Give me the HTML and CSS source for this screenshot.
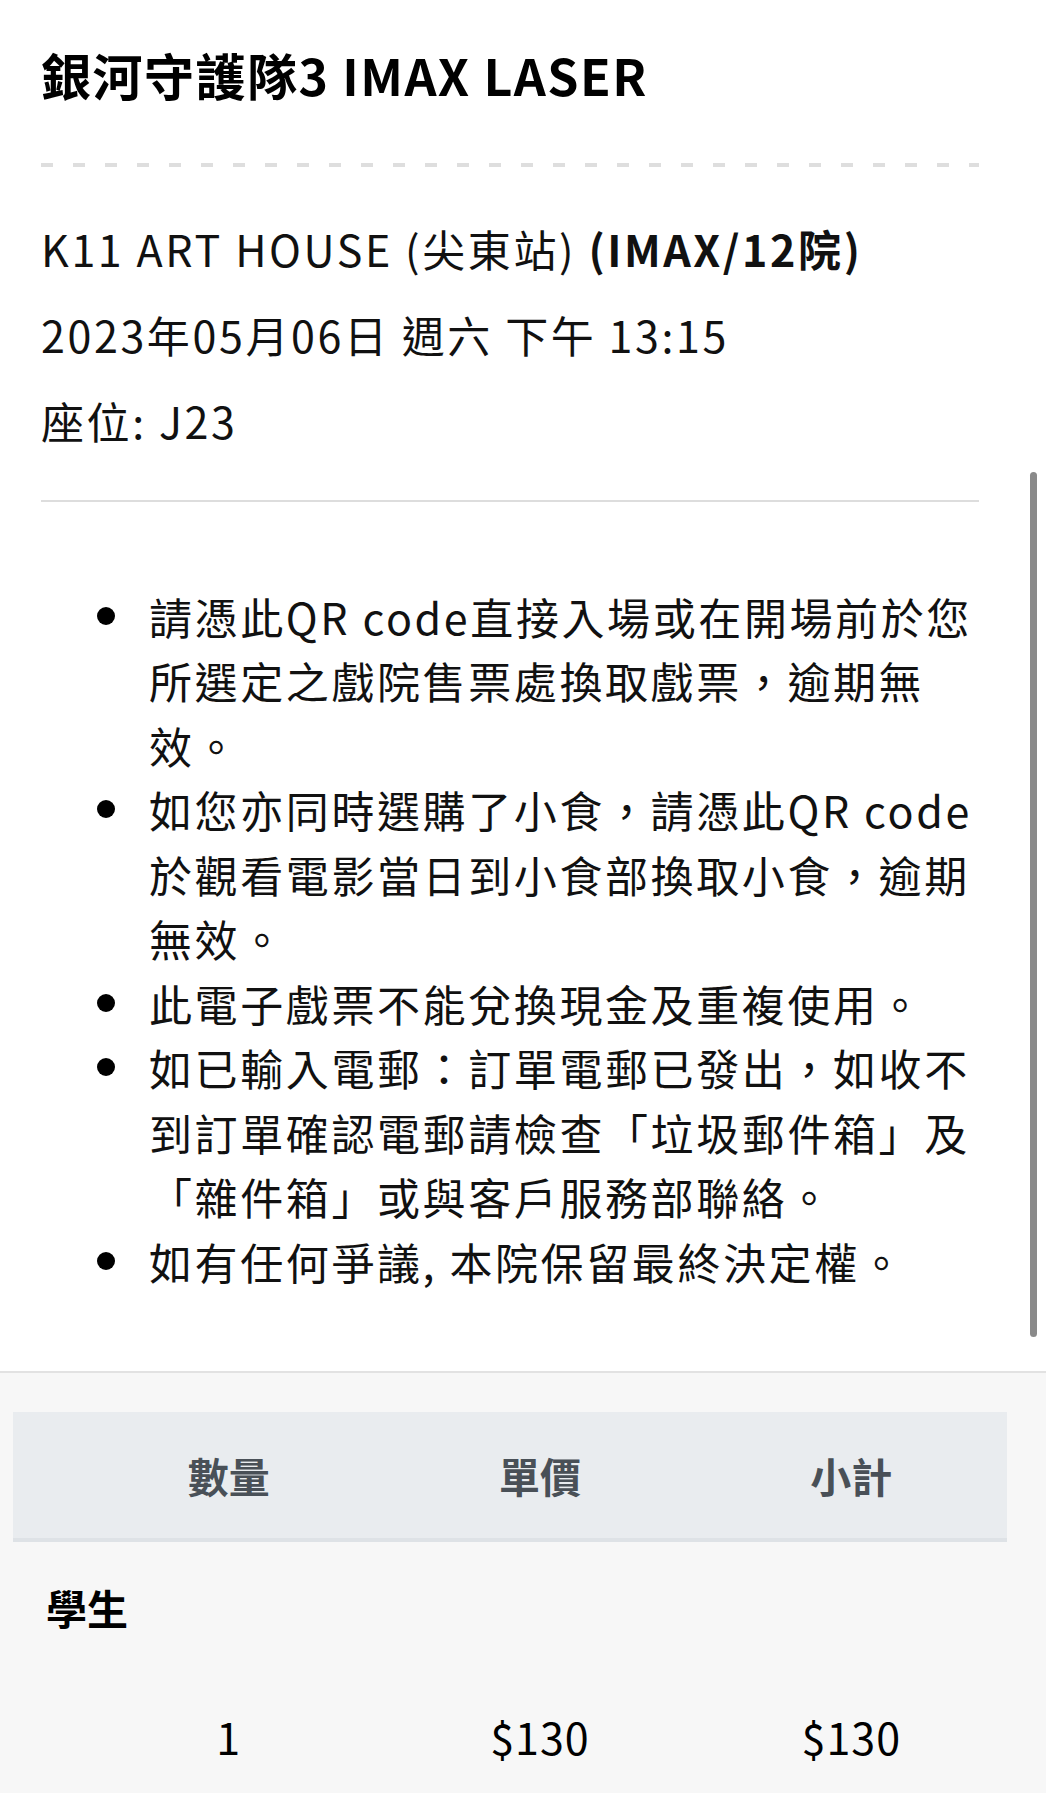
FILE: index.html
```html
<!DOCTYPE html>
<html lang="zh-Hant">
<head>
<meta charset="utf-8">
<title>電子戲票</title>
<link rel="stylesheet" href="styles.css">
</head>
<body>
<div class="page">
  <section class="ticket">
    <h1 class="title">銀河守護隊3 IMAX LASER</h1>
    <div class="dash"></div>
    <div class="info">
      <p>K11 ART HOUSE (尖東站) <b>(IMAX/12院)</b></p>
      <p>2023年05月06日 週六 下午 13:15</p>
      <p>座位: J23</p>
    </div>
    <div class="rule"></div>
    <ul class="notes">
      <li><span>請憑此QR code直接入場或在開場前於您所選定之戲院售票處換取戲票，逾期無效。</span></li>
      <li><span>如您亦同時選購了小食，請憑此QR code於觀看電影當日到小食部換取小食，逾期無效。</span></li>
      <li><span>此電子戲票不能兌換現金及重複使用。</span></li>
      <li><span>如已輸入電郵：訂單電郵已發出，如收不到訂單確認電郵請檢查「垃圾郵件箱」及「雜件箱」或與客戶服務部聯絡。</span></li>
      <li><span>如有任何爭議, 本院保留最終決定權。</span></li>
    </ul>
  </section>
  <section class="summary">
    <div class="thead">
      <div class="cell"></div>
      <div class="cell">數量</div>
      <div class="cell">單價</div>
      <div class="cell">小計</div>
    </div>
    <div class="group">學生</div>
    <div class="row">
      <div class="cell"></div>
      <div class="cell">1</div>
      <div class="cell">$130</div>
      <div class="cell">$130</div>
    </div>
  </section>
  <div class="scrollbar"></div>
</div>
</body>
</html>
```

FILE: styles.css
```css
html, body {
  margin: 0;
  padding: 0;
}
body {
  font-family: "Noto Sans CJK TC", "Noto Sans CJK SC", sans-serif;
  color: #111;
  background: #f7f7f7;
}
.page {
  position: relative;
  width: 1046px;
  min-height: 1793px;
  overflow: hidden;
}
.ticket {
  background: #fff;
  padding: 42px 67px 78px 41px;
}
.title {
  margin: 0;
  font-size: 50px;
  line-height: 64px;
  font-weight: 700;
  letter-spacing: 1.5px;
  color: #000;
}
.dash {
  margin-top: 57px;
  height: 4px;
  background: repeating-linear-gradient(to right, #dedede 0 12px, transparent 12px 32px);
}
.info {
  margin-top: 49px;
}
.info p {
  margin: 0 0 21.5px;
  font-size: 43px;
  line-height: 64.5px;
  letter-spacing: 2.6px;
}
.info p:last-child {
  margin-bottom: 0;
}
.info b {
  font-weight: 700;
}
.rule {
  margin-top: 47px;
  height: 2px;
  background: #dddddd;
}
.notes {
  list-style: none;
  margin: 82px 0 0;
  padding: 0;
}
.notes li {
  display: flex;
  align-items: flex-start;
  font-size: 43px;
  line-height: 64.5px;
  letter-spacing: 2.6px;
}
.notes li::before {
  content: "";
  flex: 0 0 18px;
  height: 18px;
  border-radius: 50%;
  background: #000;
  margin: 23px 34px 0 56px;
}
.notes li span {
  width: 830px;
}
.summary {
  border-top: 2px solid #e2e2e2;
  background: #f7f7f7;
  padding: 39px 39px 0 13px;
}
.thead, .row {
  display: grid;
  grid-template-columns: 60px 1fr 1fr 1fr;
}
.thead {
  background: #e9ecef;
  border-bottom: 4px solid #dee2e6;
  height: 126px;
  align-items: center;
  color: #495057;
  font-weight: 700;
  font-size: 41px;
}
.cell {
  text-align: center;
}
.group {
  font-weight: 700;
  font-size: 41px;
  line-height: 60px;
  color: #000;
  padding: 35px 0 0 33px;
}
.row {
  margin-top: 69px;
  font-size: 43px;
  line-height: 60px;
  letter-spacing: 1px;
  color: #000;
}
.scrollbar {
  position: absolute;
  top: 472px;
  right: 9px;
  width: 7px;
  height: 865px;
  border-radius: 4px;
  background: #8a8a8a;
}
```
